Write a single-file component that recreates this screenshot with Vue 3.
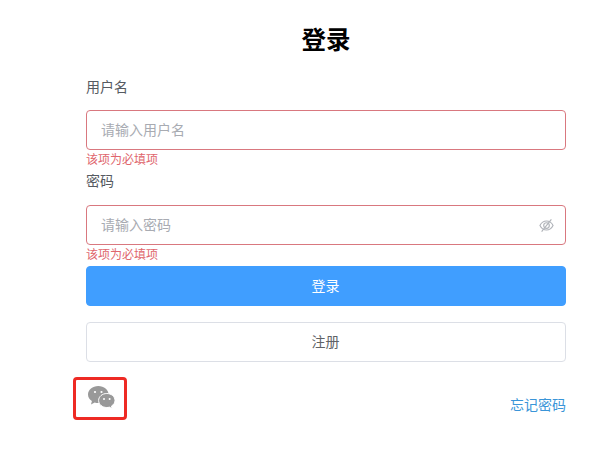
<script setup>
</script>

<template>
  <div class="page">
    <h1 class="title">登录</h1>
    <form class="form" @submit.prevent>
      <div class="field">
        <label class="label">用户名</label>
        <div class="input-box"><input class="input" placeholder="请输入用户名" /></div>
        <div class="error">该项为必填项</div>
      </div>
      <div class="field second">
        <label class="label">密码</label>
        <div class="input-box">
          <input class="input" type="password" placeholder="请输入密码" />
          <svg class="eye" viewBox="0 0 16 16" width="15" height="15" fill="none" stroke="#b0b3b9" stroke-width="1.2">
            <path d="M1 8c1.600-3.200 3.900-4.800 7-4.800s5.400 1.600 7 4.800c-1.600 3.200-3.900 4.800-7 4.800S2.600 11.200 1 8z" />
            <circle cx="8" cy="8" r="3" />
            <path d="M13.200 1.500 2.800 14.500" />
          </svg>
        </div>
        <div class="error">该项为必填项</div>
      </div>
      <button class="btn primary" type="button">登录</button>
      <button class="btn plain" type="button">注册</button>
      <div class="footer">
        <div class="wechat-wrap">
          <svg class="wechat" viewBox="0 0 27 23" width="27" height="23">
            <path fill="#999" d="M10.300 0C4.600 0 0 3.800 0 8.500c0 2.700 1.500 5 3.900 6.600L3 18.500l3.700-2.100c1.100.4 2.300.6 3.600.6 5.700 0 10.300-3.800 10.300-8.500S16 0 10.300 0z" />
            <path fill="#999" stroke="#fff" stroke-width="1" d="M27 14.500c0-3.900-3.700-7-8.200-7s-8.200 3.100-8.200 7 3.700 7 8.200 7c.9 0 1.800-.1 2.600-.4l2.700 1.700-.6-2.800c2.300-1.300 3.500-3.300 3.500-5.500z" />
            <circle cx="7" cy="6" r="1.100" fill="#fff" />
            <circle cx="13.500" cy="6" r="1.100" fill="#fff" />
            <circle cx="16" cy="13" r="1" fill="#fff" />
            <circle cx="21.600" cy="13" r="1" fill="#fff" />
          </svg>
        </div>
        <a class="forgot">忘记密码</a>
      </div>
    </form>
  </div>
</template>

<style scoped>
.page {
  width: 605px;
  height: 452px;
  box-sizing: border-box;
  padding: 24px 39px 0 86px;
  font-family: "Liberation Sans", "Noto Sans CJK SC", sans-serif;
  background: #fff;
  overflow: hidden;
}
.title {
  margin: 0 0 19px;
  height: 34px;
  line-height: 34px;
  font-size: 24.500px;
  font-weight: 700;
  text-align: center;
  color: #000;
}
.form { display: flex; flex-direction: column; }
.field { display: flex; flex-direction: column; }
.label {
  height: 20px;
  line-height: 20px;
  font-size: 14px;
  color: #565a61;
  margin-bottom: 13px;
}
.second { margin-top: 2px; }
.second .label { margin-bottom: 14px; }
.input-box {
  position: relative;
  height: 40px;
  box-sizing: border-box;
  border: 1px solid #d9787f;
  border-radius: 4px;
}
.input {
  width: 100%;
  height: 100%;
  box-sizing: border-box;
  padding: 0 14px;
  border: 0;
  outline: 0;
  background: transparent;
  font: inherit;
  font-size: 14px;
}
.input::placeholder { color: #a8abb2; }
.eye { position: absolute; right: 11px; top: 12px; }
.error {
  margin-top: 1px;
  height: 18px;
  line-height: 18px;
  font-size: 12px;
  color: #e0666d;
}
.btn {
  width: 100%;
  height: 40px;
  box-sizing: border-box;
  border-radius: 4px;
  font: inherit;
  font-size: 14px;
  padding: 0 1px 2px 0;
}
.primary {
  background: #409eff;
  border: 1px solid #409eff;
  color: #fff;
  margin-top: 2px;
}
.plain {
  background: #fff;
  border: 1px solid #dcdfe6;
  color: #606266;
  margin-top: 16px;
}
.footer {
  display: flex;
  align-items: flex-end;
  justify-content: space-between;
  margin-top: 15px;
}
.wechat-wrap {
  position: relative;
  display: flex;
  align-items: flex-start;
  height: 43px;
  box-sizing: border-box;
  padding: 9px 0 0 2px;
}
.wechat-wrap::after {
  content: "";
  position: absolute;
  left: -13px;
  top: 0;
  width: 54px;
  height: 43px;
  box-sizing: border-box;
  border: 3px solid #ee2a24;
  border-radius: 4px;
}
.forgot {
  font-size: 14px;
  line-height: 20px;
  margin-bottom: 5px;
  color: #3a95d8;
}
</style>
